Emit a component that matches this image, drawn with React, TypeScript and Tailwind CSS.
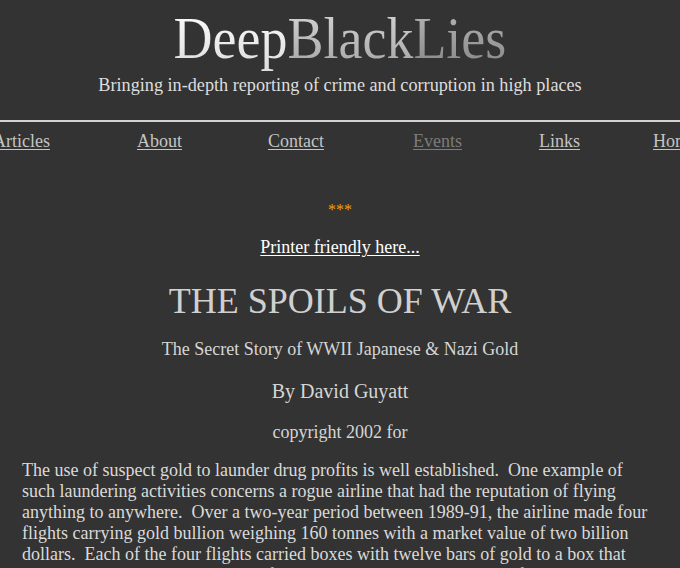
const NAV_LINKS = [
  { label: 'Articles', gap: 'ml-[-7px]', muted: false },
  { label: 'About', gap: 'ml-[87px]', muted: false },
  { label: 'Contact', gap: 'ml-[86px]', muted: false },
  { label: 'Events', gap: 'ml-[89px]', muted: true },
  { label: 'Links', gap: 'ml-[77px]', muted: false },
  { label: 'Home', gap: 'ml-[73px]', muted: false },
];

function Logo() {
  return (
    <div className="flex flex-col items-center pt-[8px]">
      <h1 className="origin-center scale-x-90 whitespace-nowrap text-[60px] leading-[60px] font-normal">
        <span className="bg-linear-to-b from-[#ffffff] to-[#dcdcdc] bg-clip-text text-transparent">
          Deep
        </span>
        <span className="bg-linear-to-b from-[#d8d8d8] to-[#a4a4a4] bg-clip-text text-transparent">
          Black
        </span>
        <span className="bg-linear-to-b from-[#b8b8b8] to-[#868686] bg-clip-text text-transparent">
          Lies
        </span>
      </h1>
      <p className="mt-[7px] whitespace-nowrap text-[18.2px] leading-[20px] text-[#dedede]">
        Bringing in-depth reporting of crime and corruption in high places
      </p>
    </div>
  );
}

function Nav() {
  return (
    <nav className="mt-[9px] flex overflow-hidden whitespace-nowrap text-[18px] leading-[20px]">
      {NAV_LINKS.map((link) => (
        <a
          key={link.label}
          href="#"
          className={`${link.gap} shrink-0 underline underline-offset-2 ${
            link.muted ? 'text-[#7c7c7c]' : 'text-[#c4c4c4]'
          }`}
        >
          {link.label}
        </a>
      ))}
    </nav>
  );
}

export default function App() {
  return (
    <div
      className="h-[568px] w-[680px] overflow-hidden bg-[#333333] text-[#dcdcdc]"
      style={{ fontFamily: '"Liberation Serif", "Times New Roman", serif' }}
    >
      <Logo />
      <div className="mt-[25px] h-[2px] w-full bg-[#d2d2d2]" />
      <Nav />

      <main className="flex flex-col items-center text-center">
        <p className="mt-[50px] text-[16px] leading-[18px] text-[#f0a000]">***</p>
        <a
          href="#"
          className="mt-[18px] text-[18px] leading-[20px] text-white underline underline-offset-2"
        >
          Printer friendly here...
        </a>
        <h2 className="mt-[24px] text-[36px] leading-[40px] text-[#d0d0d0]">
          THE SPOILS OF WAR
        </h2>
        <p className="mt-[18px] text-[18px] leading-[20px] text-[#d6d6d6]">
          The Secret Story of WWII Japanese &amp; Nazi Gold
        </p>
        <p className="mt-[21px] text-[20px] leading-[23px] text-[#d6d6d6]">By David Guyatt</p>
        <p className="mt-[19px] text-[18px] leading-[20px] text-[#d6d6d6]">copyright 2002 for</p>
      </main>

      <p className="mt-[18px] pl-[22px] pr-[20px] text-[18px] leading-[21px] text-[#dadada]">
        The use of suspect gold to launder drug profits is well established.{'\u00a0 '}One
        example of such laundering activities concerns a rogue airline that had the
        reputation of flying anything to anywhere.{'\u00a0 '}Over a two-year period between
        1989-91, the airline made four flights carrying gold bullion weighing 160 tonnes
        with a market value of two billion dollars.{'\u00a0 '}Each of the four flights carried
        boxes with twelve bars of gold to a box that reportedly weighed 41 tonnes per
        flight.{'\u00a0 '}All the bars were allegedly from Indonesia and the Philippines.
      </p>
    </div>
  );
}
